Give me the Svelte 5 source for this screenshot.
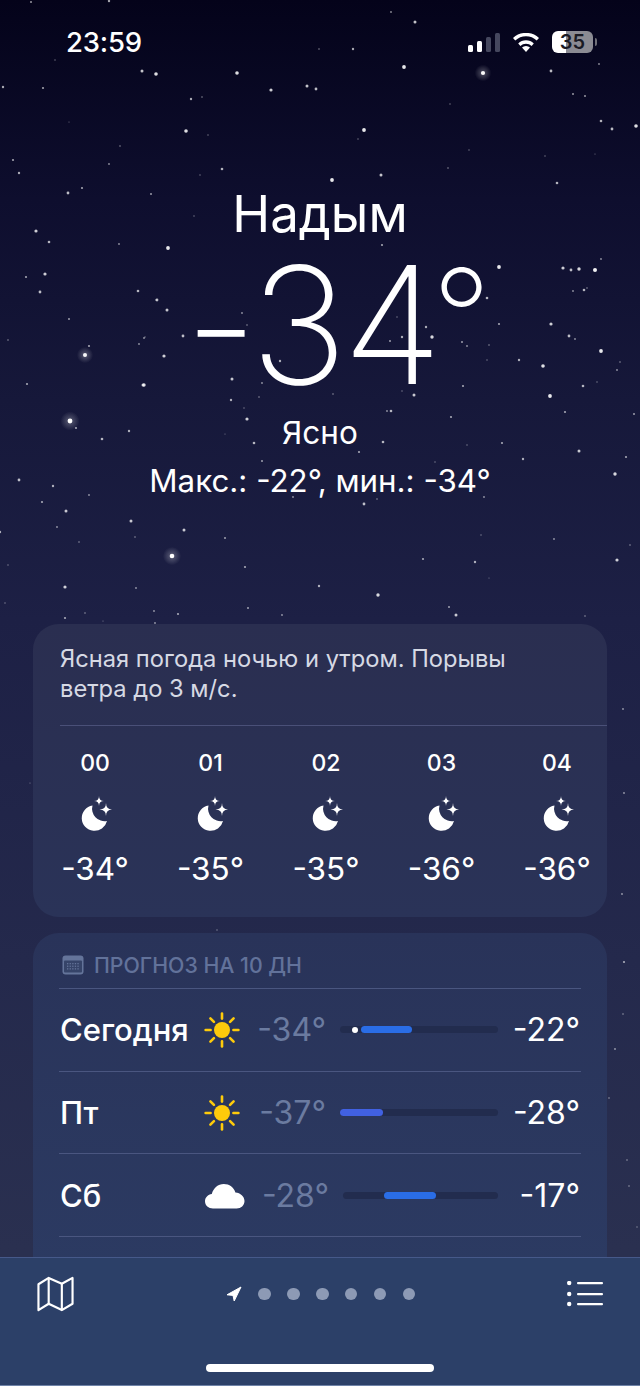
<script>
	// sky: [x, y, radius]; radius above 2 gets a soft halo
	const stars = [
		[31,2,1],[109,1,1.2],[391,12,.9],[415,22,1.5],[319,49,.8],[353,49,1.2],[55,60,.7],[142,71,1.5],[156,74,1.8],[237,73,1.8],
		[404,67,1.9],[483,73,2.1],[551,71,1.4],[599,64,.9],[3,87,1.2],[43,88,1.1],[191,99,1.2],[202,97,.8],[271,90,1.6],[307,86,1.5],
		[316,89,1.4],[450,104,.7],[573,94,1],[585,96,1],[69,122,.6],[186,131,1.8],[208,135,.7],[364,130,1.9],[358,139,.7],[601,121,1.3],
		[612,129,1.4],[636,126,1.8],[120,146,.8],[469,150,.7],[545,156,.7],[595,154,.6],[13,160,1.1],[109,164,.9],[19,173,1.2],[222,169,1.3],
		[448,168,.8],[200,175,.7],[381,175,1.5],[332,180,1.9],[557,183,1.3],[82,188,1.1],[68,193,1.4],[151,194,1],
		[168,248,1.9],[194,216,.7],[382,245,1.1],[156,300,.8],[167,310,1.5],[164,356,1.6],[143,385,1.5],[183,336,1.4],[242,313,.9],
		[247,325,.8],[280,361,1.2],[397,317,.7],[426,327,1.2],[432,337,1.7],[402,337,1.2],[390,341,1],[462,342,1],[467,346,.9],[487,298,1.3],
		[499,267,1.9],[499,324,1.1],[489,345,.8],[487,360,.7],[402,353,.8],[463,386,1.1],[414,395,1.5],[232,379,1.5],[262,383,.9],[259,397,.8],
		[231,400,1.2],[333,394,.8],[402,391,.7],[387,411,.9],[391,411,1.3],[451,417,1.1],[247,419,1.6],[244,408,.7],[225,434,.6],[254,443,1.3],
		[383,442,1.3],[359,452,1.1],[467,445,.7],[262,461,1],[435,462,.7],[145,337,.7],[364,504,1.4],[377,499,.8],[484,497,.9],[293,497,.9],
		[36,231,1.6],[49,242,1.3],[119,244,.9],[26,277,1.1],[45,274,1.6],[40,292,1.4],[138,291,1.3],[157,300,1.4],[69,319,1],[8,340,.8],
		[89,346,1.1],[85,355,2.05],[144,338,.9],[139,344,.9],[144,385,1.7],[27,384,1.1],[70,421,2.4],[76,428,1.1],[102,439,1.3],[129,431,1.2],
		[19,480,1.4],[53,486,1.2],[89,495,.9],[42,502,1.1],[66,511,1.5],[57,527,.9],[131,521,1.5],[135,537,.8],[0,532,1.2],[79,542,.8],
		[8,565,.7],[65,587,1.6],[136,588,.9],[5,603,.7],[154,611,.9],[85,613,.8],[65,618,1.1],[155,623,.9],[103,621,.6],
		[563,268,1.6],[571,270,1.4],[579,269,1.7],[595,270,2],[601,259,.9],[573,291,.9],[584,290,1.3],[587,288,.8],[551,324,1.6],[569,336,1.4],
		[575,339,.9],[601,351,1.9],[519,360,1.2],[543,366,1.8],[620,362,.8],[617,370,.9],[597,382,.7],[583,386,1.3],[550,396,1.9],[565,412,1.1],
		[634,414,1],[502,443,1.1],[523,459,1.2],[579,451,1.5],[626,457,1.1],[615,474,1.7],[481,535,.7],[554,539,.9],[630,545,.8],[617,560,1.6],
		[489,578,.6],[585,616,.8],[184,530,1.5],[225,538,1],[172,556,2.3],[245,567,1.1],[423,559,1.1],[475,562,1.2],[319,586,1.2],[378,595,1.7],
		[178,614,1.1],[248,608,1],[282,615,.9],[449,607,1],[456,615,1.5],
		[623,709,.9],[624,793,.9],[622,894,.9],[624,962,1.1],[623,1014,.8],[615,1049,.9],[609,1098,.8],[627,1160,.8],[629,1186,.8],[637,1227,.7],[30,783,.6],[217,930,.7]
	]

	const hours = [
		{ hour: '00', temp: '-34°' },
		{ hour: '01', temp: '-35°' },
		{ hour: '02', temp: '-35°' },
		{ hour: '03', temp: '-36°' },
		{ hour: '04', temp: '-36°' }
	]

	const days = [
		{ name: 'Сегодня', icon: 'sun', low: '-34°', high: '-22°', from: 21, to: 72, color: '#2a6de6', dot: 15 },
		{ name: 'Пт', icon: 'sun', low: '-37°', high: '-28°', from: 0, to: 43, color: '#4161e2' },
		{ name: 'Сб', icon: 'cloud', low: '-28°', high: '-17°', from: 41, to: 93, color: '#2a6de6', shifted: true }
	]

	const rays = [0, 45, 90, 135, 180, 225, 270, 315]
	const dots = [0, 1, 2, 3, 4, 5]
	const listRows = [7, 18, 28]

	function sparkle(x, y, r) {
		return `M${x} ${y - r}Q${x} ${y} ${x + r} ${y}Q${x} ${y} ${x} ${y + r}Q${x} ${y} ${x - r} ${y}Q${x} ${y} ${x} ${y - r}Z`
	}
</script>

<div class="phone">
	<svg class="sky" width="640" height="1386" viewBox="0 0 640 1386" aria-hidden="true">
		<defs>
			<radialGradient id="halo">
				<stop offset="0" stop-color="#fff" stop-opacity=".3" />
				<stop offset="1" stop-color="#fff" stop-opacity="0" />
			</radialGradient>
		</defs>
		{#each stars as [x, y, r]}
			{#if r > 2}
				<circle cx={x} cy={y} r={r * 4} fill="url(#halo)" />
			{/if}
			<circle cx={x} cy={y} {r} fill="#fff" opacity={Math.min(1, 0.22 + r * 0.36)} />
		{/each}
	</svg>

	<div class="content">
		<header class="status">
			<span class="time">23:59</span>
			<div class="status-icons">
				<svg class="signal" width="32" height="19" viewBox="0 0 32 19">
					<rect x="0" y="12" width="5" height="7" rx="1.5" fill="#fff" />
					<rect x="9" y="8" width="5" height="11" rx="1.5" fill="#fff" />
					<rect x="18" y="4" width="5" height="15" rx="1.5" fill="#45475e" />
					<rect x="27" y="0" width="5" height="19" rx="1.5" fill="#45475e" />
				</svg>
				<svg class="wifi" width="26" height="19" viewBox="0 0 26 19">
					<path d="M13 19 9 14.6a5.6 5.6 0 0 1 8 0Z" fill="#fff" />
					<path d="M5.2 10.6a11 11 0 0 1 15.6 0l-2.2 2.4a7.8 7.8 0 0 0-11.2 0Z" fill="#fff" />
					<path d="M0 5a19 19 0 0 1 26 0l-2.3 2.6a15.6 15.6 0 0 0-21.4 0Z" fill="#fff" />
				</svg>
				<div class="battery"><span>35</span></div>
				<i class="nub"></i>
			</div>
		</header>

		<section class="hero">
			<h1>Надым</h1>
			<div class="now">-34<span class="deg">°</span></div>
			<div class="cond">Ясно</div>
			<div class="range">Макс.: -22°, мин.: -34°</div>
		</section>

		<section class="card hourly">
			<p class="summary">Ясная погода ночью и утром. Порывы<br />ветра до 3 м/с.</p>
			<div class="hours">
				{#each hours as h}
					<div class="hour">
						<span class="hour-label">{h.hour}</span>
						<svg class="moon" width="34" height="36" viewBox="0 0 34 36">
							<path d="M14.5 9.4A12.8 12.8 0 1 0 29 25a12.6 12.6 0 0 1-14.5-15.6Z" fill="#fff" />
							<path d={sparkle(21, 5, 5)} fill="#fff" />
							<path d={sparkle(28, 13.5, 6.5)} fill="#fff" />
						</svg>
						<span class="hour-temp">{h.temp}</span>
					</div>
				{/each}
			</div>
		</section>

		<section class="card daily">
			<div class="daily-head">
				<svg width="22" height="20" viewBox="0 0 22 20">
					<rect width="21" height="19" x=".5" y=".5" rx="3" fill="#64749a" />
					<rect width="18" height="12" x="2" y="5.5" rx="1" fill="#364469" />
					{#each [0, 1, 2, 3, 4] as col}
						{#each [0, 1, 2] as row}
							<rect x={5 + col * 2.6} y={8 + row * 2.6} width="1.3" height="1.3" fill="#64749a" />
						{/each}
					{/each}
				</svg>
				<span>ПРОГНОЗ НА 10 ДН</span>
			</div>
			{#each days as d}
				<div class="day" class:shifted={d.shifted}>
					<span class="day-name">{d.name}</span>
					<span class="day-icon">
						{#if d.icon === 'sun'}
							<svg width="36" height="36" viewBox="0 0 36 36">
								<circle cx="18" cy="18" r="8" fill="#fecb0b" />
								{#each rays as a}
									<line x1="18" y1="6.6" x2="18" y2="1.6" transform="rotate({a} 18 18)" stroke="#fecb0b" stroke-width="2.6" stroke-linecap="round" />
								{/each}
							</svg>
						{:else}
							<svg width="40" height="26" viewBox="0 0 40 26">
								<path d="M8 25.5C3.6 25.5 0 22.5 0 18.3 0 14.4 3 11.6 6.8 11 8.4 5 13 1 18.8 1 24.4 1 28.8 4.4 30.4 9.4 35.4 9.8 39.5 13.4 39.5 18 39.5 22.4 36 25.5 31.6 25.5Z" fill="#fff" />
							</svg>
						{/if}
					</span>
					<span class="day-low">{d.low}</span>
					<div class="track">
						<div class="fill" style="left:{d.from}px;width:{d.to - d.from}px;background:{d.color}"></div>
						{#if d.dot}
							<i class="dot" style="left:{d.dot}px"></i>
						{/if}
					</div>
					<span class="day-high">{d.high}</span>
				</div>
			{/each}
		</section>
	</div>

	<footer class="toolbar">
		<div class="tools">
			<svg width="37" height="36" viewBox="0 0 38 36" fill="none" stroke="#fff" stroke-width="2.2" stroke-linejoin="round">
				<path d="M1.5 8 12 1.5 25.5 7.5 36.5 1.5V28L25.5 34.5 12 28 1.5 34.5Z" />
				<path d="M12 1.5V28M25.5 7.5V34.5" />
			</svg>
			<div class="pages">
				<svg width="16" height="16" viewBox="0 0 16 16">
					<path d="M15 1 8.2 15 7 9.4 1 8.8Z" fill="#fff" stroke="#fff" stroke-width="1" stroke-linejoin="round" />
				</svg>
				{#each dots as i}
					<i class="page-dot"></i>
				{/each}
			</div>
			<svg width="36" height="26" viewBox="0 0 36 26">
				{#each listRows as y}
					<circle cx="2.2" cy={y - 5} r="2.2" fill="#fff" />
					<rect x="10" y={y - 6} width="26" height="2.2" rx="1" fill="#fff" />
				{/each}
			</svg>
		</div>
		<div class="home"></div>
	</footer>
</div>

<style>
	:global(body) {
		background: #04031a;
	}
	.phone {
		position: relative;
		display: flex;
		flex-direction: column;
		width: 640px;
		height: 1386px;
		overflow: hidden;
		color: #fff;
		font-family: Inter, "Noto Sans", sans-serif;
		background: linear-gradient(180deg, #04031a 0, #0e0e2e 200px, #16183a 400px, #1d2045 620px, #24294c 960px, #2a3050 1250px);
	}
	.sky {
		position: absolute;
		inset: 0;
		filter: blur(.4px);
	}
	.content {
		position: relative;
		flex: 1;
		min-height: 0;
		overflow: hidden;
		padding: 0 33px;
	}

	.status {
		display: flex;
		align-items: center;
		justify-content: space-between;
		height: 84px;
		margin: 0 -33px;
		padding: 0 47px 0 66px;
	}
	.time {
		font-size: 27.5px;
		font-weight: 500;
		letter-spacing: -0.2px;
	}
	.status-icons {
		display: flex;
		align-items: center;
		gap: 13px;
		position: relative;
	}
	.battery {
		display: flex;
		align-items: center;
		justify-content: center;
		width: 41px;
		height: 22px;
		border-radius: 6px;
		background: linear-gradient(90deg, #fff 0, #fff 35%, #8b8b93 35%, #8b8b93 100%);
		color: #1a1a24;
		font-size: 20px;
		font-weight: 600;
	}
	.nub {
		position: absolute;
		right: -4px;
		top: 7px;
		width: 2px;
		height: 8px;
		border-radius: 0 2px 2px 0;
		background: #6f6f78;
	}

	.hero {
		display: flex;
		flex-direction: column;
		align-items: center;
		padding-top: 100px;
		margin-bottom: 124px;
	}
	h1 {
		margin: 0;
		font-size: 51px;
		font-weight: 400;
		line-height: 60px;
	}
	.now {
		margin-top: 6px;
		padding-left: 31px;
		height: 150px;
		font-size: 163px;
		font-weight: 200;
		line-height: 150px;
		letter-spacing: -5px;
	}
	.deg {
		margin-left: -5px;
		font-size: 130px;
		vertical-align: 21px;
		line-height: 0;
	}
	.cond {
		margin-top: 14px;
		font-size: 31.5px;
		line-height: 38px;
	}
	.range {
		margin-top: 10px;
		font-size: 31.3px;
		line-height: 38px;
	}

	.card {
		border-radius: 26px;
		overflow: hidden;
	}
	.hourly {
		background: linear-gradient(180deg, #2a2e50, #2a3358);
		margin-bottom: 16px;
	}
	.summary {
		margin: 0 0 0 27px;
		padding: 20px 0 21px;
		border-bottom: 1px solid #4a5078;
		font-size: 23.7px;
		line-height: 30px;
		color: #d6d9e4;
	}
	.hours {
		display: flex;
		gap: 35.5px;
		padding: 22px 0 29px 22px;
		width: 640px;
	}
	.hour {
		flex: none;
		display: flex;
		flex-direction: column;
		align-items: center;
		width: 80px;
	}
	.hour-label {
		font-size: 23px;
		font-weight: 500;
		line-height: 30px;
	}
	.moon {
		margin-top: 18px;
	}
	.hour-temp {
		margin-top: 18px;
		font-size: 31.5px;
		font-weight: 400;
		line-height: 38px;
	}

	.daily {
		background: linear-gradient(180deg, #293359, #2c3b63);
		padding: 0 26px 60px;
	}
	.daily-head {
		display: flex;
		align-items: center;
		gap: 10px;
		box-sizing: border-box;
		height: 56px;
		padding: 8px 0 0 3px;
		border-bottom: 1px solid #4a5680;
		font-size: 21.3px;
		font-weight: 500;
		color: #62729a;
	}
	.day {
		display: grid;
		grid-template-columns: 143px 40px 84px 172px 1fr;
		align-items: center;
		box-sizing: border-box;
		height: 82.7px;
		border-bottom: 1px solid #4a5680;
	}
	.day-name {
		padding-left: 1px;
		font-size: 31px;
		font-weight: 500;
	}
	.day-icon {
		display: flex;
		justify-content: center;
	}
	.day-icon svg {
		flex: none;
	}
	.shifted .day-icon {
		margin: 2px -3px 0 3px;
	}
	.day-low {
		text-align: right;
		font-size: 32px;
		font-weight: 400;
		color: #6b7ba0;
	}
	.track {
		position: relative;
		height: 7px;
		margin-left: 14px;
		border-radius: 4px;
		background: #222c4e;
	}
	.shifted .day-low {
		margin-right: -3px;
	}
	.shifted .track {
		margin-left: 17px;
	}
	.fill {
		position: absolute;
		top: 0;
		bottom: 0;
		border-radius: 4px;
	}
	.dot {
		position: absolute;
		top: 0.5px;
		width: 6px;
		height: 6px;
		margin-left: -3px;
		border-radius: 50%;
		background: #fff;
	}
	.day-high {
		padding-right: 1px;
		text-align: right;
		font-size: 32px;
		font-weight: 400;
	}

	.toolbar {
		position: relative;
		flex: none;
		box-sizing: border-box;
		height: 129px;
		background: #2c4068;
		border-top: 1px solid #46598a;
		border-bottom: 1px solid #6f83a8;
	}
	.tools {
		display: flex;
		align-items: center;
		justify-content: space-between;
		height: 72px;
		padding: 0 37px;
	}
	.pages {
		display: flex;
		align-items: center;
		gap: 16.4px;
	}
	.page-dot {
		width: 12.6px;
		height: 12.6px;
		border-radius: 50%;
		background: #8d9ab5;
	}
	.home {
		width: 228px;
		height: 8px;
		margin: 34px auto 0;
		border-radius: 4px;
		background: #fff;
	}
</style>
